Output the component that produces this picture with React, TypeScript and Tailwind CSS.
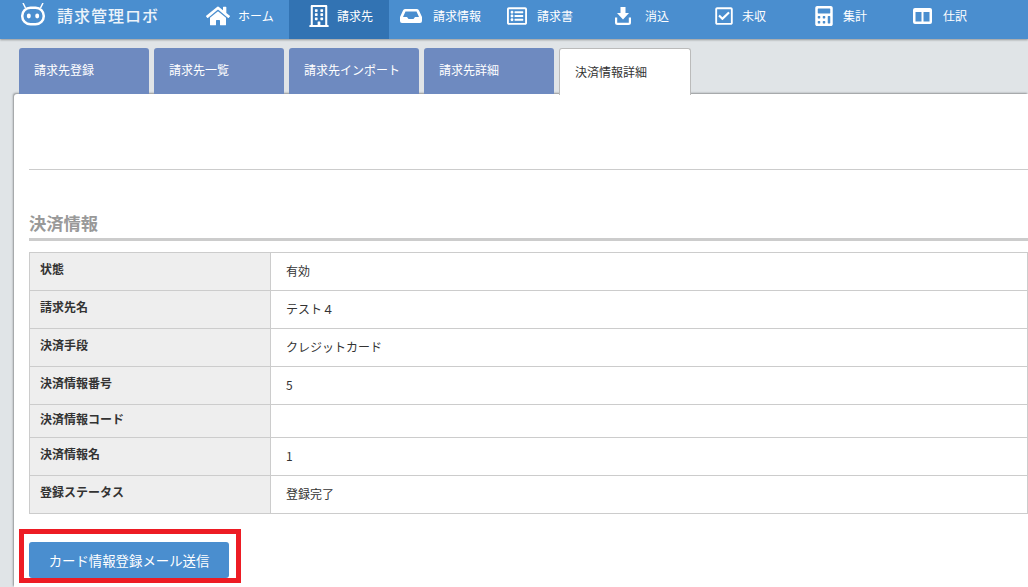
import { FaHome, FaRegBuilding, FaRegListAlt, FaRegCheckSquare, FaCalculator } from 'react-icons/fa';

function InboxIcon() {
    return (
        <svg width="22" height="14" viewBox="0 0 22 14" fill="white" fillRule="evenodd">
            <path d="M5 0H17Q18.5 0 19 1.5L22 8V12Q22 14 20 14H2Q0 14 0 12V8L3 1.5Q3.5 0 5 0ZM5.5 2.5H16.5L19 8H15L13.5 10H8.5L7 8H3Z" />
        </svg>
    );
}

function TrayArrowIcon() {
    return (
        <svg width="16" height="18" viewBox="0 0 16 18" fill="none">
            <path d="M5.5 0H10.5V6H14L8 12.5L2 6H5.5Z" fill="white" />
            <path d="M1.1 10.5V15.5Q1.1 16.9 2.5 16.9H13.5Q14.9 16.9 14.9 15.5V10.5" stroke="white" strokeWidth="2.2" />
        </svg>
    );
}

function ColumnsIcon() {
    return (
        <svg width="19" height="16" viewBox="0 0 19 16" fill="white" fillRule="evenodd">
            <path d="M2 0H17Q19 0 19 2V14Q19 16 17 16H2Q0 16 0 14V2Q0 0 2 0ZM2.5 4V13.5H8.5V4ZM10.5 4V13.5H16.5V4Z" />
        </svg>
    );
}

const navItems = [
    { label: 'ホーム', Icon: FaHome, item: 'w-[99px] pl-[16px]', icon: 'w-[32px] text-[24px]', active: false },
    { label: '請求先', Icon: FaRegBuilding, item: 'w-[100px] pl-[19px]', icon: 'w-[29px] text-[22px]', active: true },
    { label: '請求情報', Icon: InboxIcon, item: 'w-[107px] pl-[11px]', icon: 'w-[33px]', active: false },
    { label: '請求書', Icon: FaRegListAlt, item: 'w-[107px] pl-[11px]', icon: 'w-[30px] text-[20px]', active: false },
    { label: '消込', Icon: TrayArrowIcon, item: 'w-[98px] pl-[12px]', icon: 'w-[30px]', active: false },
    { label: '未収', Icon: FaRegCheckSquare, item: 'w-[100px] pl-[13px]', icon: 'w-[28px] text-[20px]', active: false },
    { label: '集計', Icon: FaCalculator, item: 'w-[98px] pl-[13px]', icon: 'w-[29px] text-[20px]', active: false },
    { label: '仕訳', Icon: ColumnsIcon, item: 'w-[100px] pl-[14px]', icon: 'w-[30px]', active: false },
];

const tabs = ['請求先登録', '請求先一覧', '請求先インポート', '請求先詳細'];

const rows = [
    { label: '状態', value: '有効', height: 'h-[38px]' },
    { label: '請求先名', value: 'テスト４', height: 'h-[38px]' },
    { label: '決済手段', value: 'クレジットカード', height: 'h-[38px]' },
    { label: '決済情報番号', value: '5', height: 'h-[38px]' },
    { label: '決済情報コード', value: '', height: 'h-[33px]' },
    { label: '決済情報名', value: '1', height: 'h-[38px]' },
    { label: '登録ステータス', value: '登録完了', height: 'h-[38px]' },
];

function Logo() {
    return (
        <div className="flex w-[190px] shrink-0 items-center pb-[9px] pl-[18px]">
            <svg width="30" height="24" viewBox="0 0 30 24" className="shrink-0" fill="none">
                <rect x="4.2" y="4.8" width="21.6" height="16.4" rx="8.2" stroke="white" strokeWidth="2.5" />
                <ellipse cx="10.8" cy="13" rx="2" ry="2.4" fill="white" />
                <ellipse cx="19.2" cy="13" rx="2" ry="2.4" fill="white" />
                <path d="M5 0L7.5 5M25 0L22.5 5" stroke="white" strokeWidth="1.5" />
            </svg>
            <span className="ml-[9px] whitespace-nowrap text-[16px] font-medium tracking-[1px] text-white/90">請求管理ロボ</span>
        </div>
    );
}

export default function App() {
    return (
        <div className="h-[587px] w-[1028px] overflow-hidden bg-[#e0e4e7] font-['Noto_Sans_CJK_JP','Noto_Sans',sans-serif] text-[12px] text-[#333]">
            <header className="flex h-[39px] bg-[#4a8ecf] shadow-[0_1px_2px_rgba(0,0,0,0.35)]">
                <Logo />
                {navItems.map(({ label, Icon, item, icon, active }) => (
                    <div key={label} className={`flex shrink-0 items-center pb-[7px] text-white ${item} ${active ? 'bg-[#3273b3]' : ''}`}>
                        <span className={`flex shrink-0 items-center ${icon}`}>
                            <Icon />
                        </span>
                        <span className="whitespace-nowrap">{label}</span>
                    </div>
                ))}
            </header>

            <nav className="mt-[9px] flex h-[46px] gap-[5px] pl-[19px]">
                {tabs.map(tab => (
                    <div key={tab} className="flex w-[130px] items-center rounded-t-[3px] bg-[#6e8ac0] pb-[3px] pl-[15px] text-white">
                        {tab}
                    </div>
                ))}
                <div className="flex h-[47px] w-[132px] items-center rounded-t-[3px] border border-b-0 border-[#bbb] bg-white pl-[15px]">
                    決済情報詳細
                </div>
            </nav>

            <main className="ml-[14px] h-[493px] rounded-tl-[3px] bg-white pl-[15px] pt-[75px] shadow-[-1px_-1px_2px_rgba(0,0,0,0.35)]">
                <hr className="border-[#ccc]" />
                <h2 className="mt-[41px] h-[30px] border-b-[3px] border-[#ccc] text-[17.3px] leading-[24px] font-bold text-[#999]">決済情報</h2>

                <div className="mt-[11px] border border-b-0 border-[#ccc]">
                    {rows.map(row => (
                        <div key={row.label} className={`flex border-b border-[#ccc] ${row.height}`}>
                            <div className="flex w-[241px] shrink-0 items-center border-r border-[#ccc] bg-[#eee] pb-[5px] pl-[10px] font-bold">
                                {row.label}
                            </div>
                            <div className="flex items-center pb-[2px] pl-[15px]">{row.value}</div>
                        </div>
                    ))}
                </div>

                <div className="-ml-[10px] mt-[15px] w-[222px] border-[5px] border-[#ed1c24] pl-[5px] pt-[8px]">
                    <button className="flex h-[36px] w-[200px] items-center justify-center rounded-[3px] bg-[#4a8ecf] text-[13.4px] text-white">
                        カード情報登録メール送信
                    </button>
                </div>
            </main>
        </div>
    );
}
